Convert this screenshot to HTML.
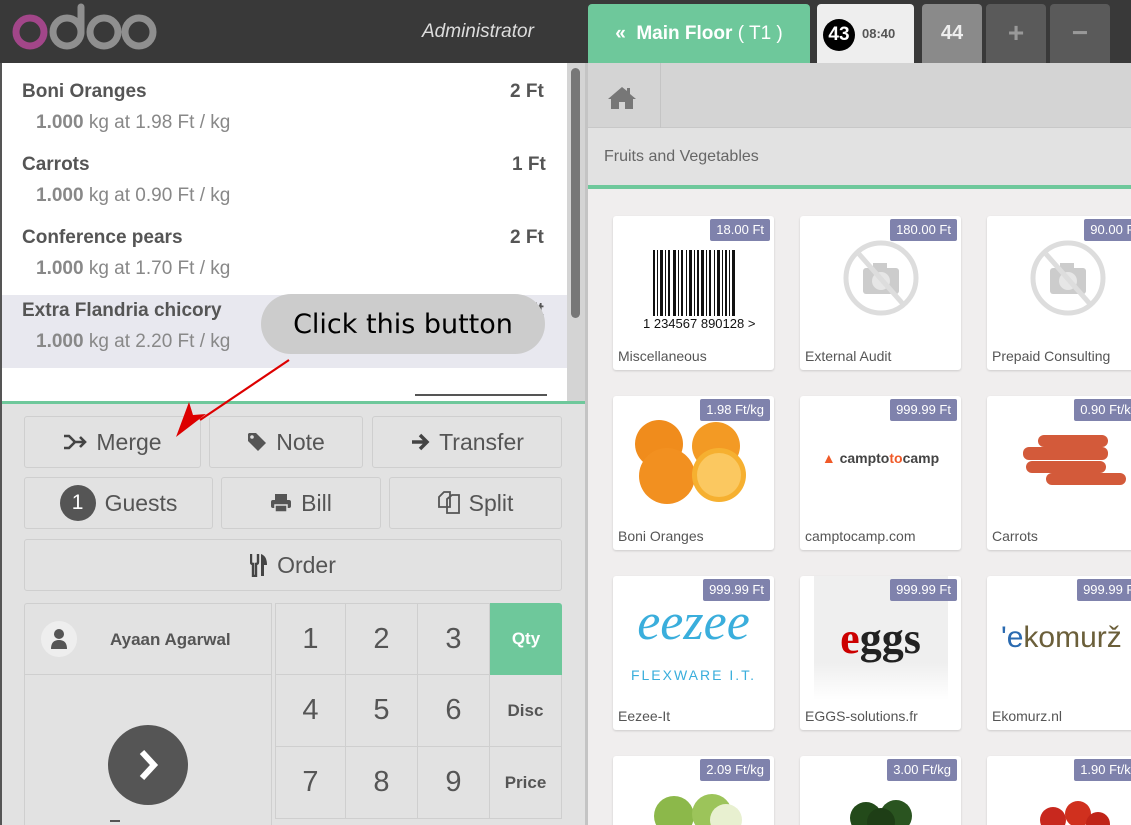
<!DOCTYPE html>
<html style="width:1131px;height:825px;overflow:hidden"><head><meta charset="utf-8"><style>
*{box-sizing:border-box;margin:0;padding:0}
body{width:1131px;height:825px;overflow:hidden;position:relative;background:#f0eeee;font-family:"Liberation Sans",sans-serif;color:#555}
.a{position:absolute}
.btn{position:absolute;background:#e2e2e2;border:1px solid #cfcfcf;border-radius:3px;display:flex;align-items:center;justify-content:center;font-size:23px;color:#555;gap:9px}
.line .n{position:absolute;left:22px;font-size:19px;font-weight:bold;color:#555}
.line .d{position:absolute;left:36px;font-size:19px;color:#888}
.line .d b{color:#888}
.np{position:absolute;border-right:1px solid #cfcfcf;border-bottom:1px solid #cfcfcf;display:flex;align-items:center;justify-content:center;font-size:29px;color:#555;background:#e2e2e2}
.card{position:absolute;width:161px;height:154px;background:#fff;border-radius:3px;box-shadow:0 1px 2px rgba(0,0,0,.15);overflow:hidden}
.card .pr{position:absolute;right:4px;top:3px;background:#7f82ac;color:#fff;font-size:13px;padding:2px 6px;border-radius:2px;height:22px;line-height:18px}
.card .nm{position:absolute;left:5px;bottom:6px;font-size:14px;color:#555}
.card .img{position:absolute;left:0;top:0;width:161px;height:124px;display:flex;align-items:center;justify-content:center}
</style></head><body>
<div class="a" style="left:0;top:0;width:1131px;height:63px;background:#393939"></div>
<svg class="a" style="left:0;top:0" width="170" height="63">
<circle cx="30" cy="32" r="14" fill="none" stroke="#a24689" stroke-width="7"/>
<circle cx="67" cy="32" r="14" fill="none" stroke="#8f8f8f" stroke-width="7"/>
<line x1="81" y1="7" x2="81" y2="33" stroke="#8f8f8f" stroke-width="7" stroke-linecap="round"/>
<circle cx="104" cy="32" r="14" fill="none" stroke="#8f8f8f" stroke-width="7"/>
<circle cx="139" cy="32" r="14" fill="none" stroke="#8f8f8f" stroke-width="7"/>
</svg>
<div class="a" style="left:422px;top:21px;font-size:19px;font-style:italic;color:#ddd">Administrator</div>
<div class="a" style="left:588px;top:4px;width:222px;height:59px;background:#6ec89b;border-radius:4px 4px 0 0;color:#fff;font-size:19px;font-weight:bold;display:flex;align-items:center;justify-content:center">« &nbsp;Main Floor <span style="font-weight:normal">&nbsp;( T1 )</span></div>
<div class="a" style="left:817px;top:4px;width:97px;height:59px;background:#eee;border-radius:4px 4px 0 0"></div>
<div class="a" style="left:823px;top:19px;width:32px;height:32px;border-radius:50%;background:#000;color:#fff;font-size:19px;font-weight:bold;text-align:center;line-height:32px">43</div>
<div class="a" style="left:862px;top:26px;font-size:13px;font-weight:bold;color:#555">08:40</div>
<div class="a" style="left:922px;top:4px;width:60px;height:59px;background:#8a8a8a;border-radius:4px 4px 0 0;color:#eee;font-size:20px;font-weight:bold;text-align:center;line-height:59px">44</div>
<div class="a" style="left:986px;top:4px;width:60px;height:59px;background:#5a5a5a;border-radius:4px 4px 0 0;color:#999;font-size:28px;font-weight:bold;text-align:center;line-height:57px">+</div>
<div class="a" style="left:1050px;top:4px;width:60px;height:59px;background:#5a5a5a;border-radius:4px 4px 0 0;color:#999;font-size:28px;font-weight:bold;text-align:center;line-height:57px">−</div>

<div class="a" style="left:588px;top:63px;width:543px;height:65px;background:#d4d4d4;border-bottom:1px solid #c8c8c8"></div>
<div class="a" style="left:660px;top:63px;width:1px;height:65px;background:#c4c4c4"></div>
<svg class="a" style="left:607px;top:86px" width="30" height="24" viewBox="0 0 30 24"><path d="M15 1 L1 13 L4 13 L4 23 L12 23 L12 16 L18 16 L18 23 L26 23 L26 13 L29 13 L23 8 L23 2 L20 2 L20 5 Z" fill="#777"/></svg>
<div class="a" style="left:588px;top:128px;width:543px;height:57px;background:#e2e2e2"></div>
<div class="a" style="left:604px;top:148px;font-size:16px;color:#666">Fruits and Vegetables</div>
<div class="a" style="left:588px;top:185px;width:543px;height:4px;background:#6ec89b"></div>
<div class="a" style="left:588px;top:189px;width:543px;height:636px;background:#f0eeee;overflow:hidden">
<div style="position:relative;left:-588px;top:-189px">
<div class="card" style="left:613px;top:216px"><div class="img"><svg width="130" height="100"><g fill="#111">
<rect x="24" y="22" width="2" height="84"/><rect x="28" y="22" width="1" height="84"/><rect x="31" y="22" width="3" height="84"/><rect x="36" y="22" width="1" height="84"/><rect x="39" y="22" width="2" height="84"/><rect x="44" y="22" width="3" height="84"/><rect x="49" y="22" width="1" height="84"/><rect x="52" y="22" width="2" height="84"/><rect x="57" y="22" width="1" height="84"/><rect x="60" y="22" width="3" height="84"/><rect x="65" y="22" width="1" height="84"/><rect x="68" y="22" width="2" height="84"/><rect x="72" y="22" width="3" height="84"/><rect x="77" y="22" width="1" height="84"/><rect x="80" y="22" width="2" height="84"/><rect x="85" y="22" width="1" height="84"/><rect x="88" y="22" width="3" height="84"/><rect x="93" y="22" width="1" height="84"/><rect x="96" y="22" width="2" height="84"/><rect x="100" y="22" width="1" height="84"/><rect x="103" y="22" width="3" height="84"/></g>
<rect x="20" y="88" width="100" height="14" fill="#fff"/><text x="14" y="100" font-size="13" font-family="Liberation Sans" fill="#111">1  234567  890128  &gt;</text></svg></div><div class="pr">18.00 Ft</div><div class="nm">Miscellaneous</div></div>
<div class="card" style="left:800px;top:216px"><div class="img"><svg width="80" height="80" viewBox="0 0 80 80"><circle cx="40" cy="40" r="35" fill="none" stroke="#ddd" stroke-width="5"/><rect x="22" y="30" width="36" height="26" rx="3" fill="#ccc"/><rect x="32" y="25" width="14" height="7" fill="#ccc"/><circle cx="40" cy="43" r="9" fill="#e6e6e6"/><line x1="18" y1="16" x2="62" y2="66" stroke="#ddd" stroke-width="5"/></svg></div><div class="pr">180.00 Ft</div><div class="nm">External Audit</div></div>
<div class="card" style="left:987px;top:216px"><div class="img"><svg width="80" height="80" viewBox="0 0 80 80"><circle cx="40" cy="40" r="35" fill="none" stroke="#ddd" stroke-width="5"/><rect x="22" y="30" width="36" height="26" rx="3" fill="#ccc"/><rect x="32" y="25" width="14" height="7" fill="#ccc"/><circle cx="40" cy="43" r="9" fill="#e6e6e6"/><line x1="18" y1="16" x2="62" y2="66" stroke="#ddd" stroke-width="5"/></svg></div><div class="pr">90.00 Ft</div><div class="nm">Prepaid Consulting</div></div>
<div class="card" style="left:613px;top:396px"><div class="img"><svg width="140" height="100"><circle cx="35" cy="36" r="24" fill="#f08c1c"/><circle cx="92" cy="38" r="24" fill="#f39a24"/><circle cx="43" cy="68" r="28" fill="#f29020"/><circle cx="95" cy="67" r="27" fill="#f6b030"/><circle cx="95" cy="67" r="22" fill="#fbc860"/></svg></div><div class="pr">1.98 Ft/kg</div><div class="nm">Boni Oranges</div></div>
<div class="card" style="left:800px;top:396px"><div class="img"><span style="font-size:14px;font-weight:bold;color:#444"><span style="color:#f05a28">▲</span> campto<span style="color:#f05a28">to</span>camp</span></div><div class="pr">999.99 Ft</div><div class="nm">camptocamp.com</div></div>
<div class="card" style="left:987px;top:396px"><div class="img"><svg width="120" height="70"><g fill="#d35a3a"><rect x="30" y="12" width="70" height="12" rx="6"/><rect x="15" y="24" width="85" height="13" rx="6"/><rect x="18" y="38" width="80" height="12" rx="6"/><rect x="38" y="50" width="80" height="12" rx="6"/></g></svg></div><div class="pr">0.90 Ft/kg</div><div class="nm">Carrots</div></div>
<div class="card" style="left:613px;top:576px"><div class="img" style="flex-direction:column"><span style="font-size:52px;font-style:italic;color:#3aaedc;font-family:'Liberation Serif',serif;line-height:60px">eezee</span><span style="font-size:14px;color:#3aaedc;letter-spacing:2px;margin-top:14px">FLEXWARE I.T.</span></div><div class="pr">999.99 Ft</div><div class="nm">Eezee-It</div></div>
<div class="card" style="left:800px;top:576px"><div class="img"><div style="width:134px;height:124px;background:linear-gradient(#efefef 70%,#fff);display:flex;align-items:center;justify-content:center"><span style="font-size:44px;font-weight:bold;font-family:'Liberation Serif',serif;color:#222"><span style="color:#c00">e</span>ggs</span></div></div><div class="pr">999.99 Ft</div><div class="nm">EGGS-solutions.fr</div></div>
<div class="card" style="left:987px;top:576px"><div class="img" style="justify-content:flex-start;padding-left:14px"><span style="font-size:30px;color:#6b5f3a"><span style="color:#2a6ab0">'e</span>komurž</span></div><div class="pr">999.99 Ft</div><div class="nm">Ekomurz.nl</div></div>
<div class="card" style="left:613px;top:756px"><div class="img"><svg width="120" height="124"><circle cx="40" cy="60" r="20" fill="#8cb84a"/><circle cx="78" cy="58" r="20" fill="#9cc45a"/><circle cx="92" cy="64" r="16" fill="#e8f0d0"/></svg></div><div class="pr">2.09 Ft/kg</div></div>
<div class="card" style="left:800px;top:756px"><div class="img"><svg width="120" height="124"><circle cx="45" cy="62" r="16" fill="#234a1a"/><circle cx="75" cy="60" r="16" fill="#2a5420"/><circle cx="60" cy="66" r="14" fill="#1e3e16"/></svg></div><div class="pr">3.00 Ft/kg</div></div>
<div class="card" style="left:987px;top:756px"><div class="img"><svg width="120" height="124"><circle cx="45" cy="64" r="13" fill="#c8281e"/><circle cx="70" cy="58" r="13" fill="#d0301e"/><circle cx="90" cy="68" r="12" fill="#c02418"/></svg></div><div class="pr">1.90 Ft/kg</div></div>
</div></div>

<div class="a" style="left:0;top:63px;width:588px;height:762px;background:#e2e2e2;border-left:2px solid #555;border-right:3px solid #c4c4c4"></div>
<div class="a" style="left:2px;top:63px;width:565px;height:340px;background:#fff"></div>
<div class="a" style="left:567px;top:63px;width:18px;height:340px;background:#d4d4d4"></div>
<div class="a" style="left:571px;top:68px;width:9px;height:250px;background:#777;border-radius:5px"></div>
<div class="line">
<div class="n" style="top:81px">Boni Oranges</div>
<div class="a" style="top:81px;left:510px;font-size:19px;font-weight:bold">2 Ft</div>
<div class="d" style="top:112px"><b>1.000</b> kg at 1.98 Ft / kg</div>
<div class="n" style="top:154px">Carrots</div><div class="a" style="top:154px;left:512px;font-size:19px;font-weight:bold">1 Ft</div>
<div class="d" style="top:185px"><b>1.000</b> kg at 0.90 Ft / kg</div>
<div class="n" style="top:227px">Conference pears</div><div class="a" style="top:227px;left:510px;font-size:19px;font-weight:bold">2 Ft</div>
<div class="d" style="top:258px"><b>1.000</b> kg at 1.70 Ft / kg</div>
<div class="a" style="left:2px;top:295px;width:565px;height:73px;background:#e8e8ef"></div>
<div class="n" style="top:300px">Extra Flandria chicory</div><div class="a" style="top:300px;left:510px;font-size:19px;font-weight:bold">2 Ft</div>
<div class="d" style="top:331px"><b>1.000</b> kg at 2.20 Ft / kg</div>
</div>
<div class="a" style="left:415px;top:394px;width:132px;height:2px;background:#555"></div>
<div class="a" style="left:2px;top:401px;width:583px;height:3px;background:#6ec89b"></div>

<div class="btn" style="left:24px;top:416px;width:177px;height:52px"><svg width="24" height="16" viewBox="0 0 24 16"><path d="M1 2 L6 2 L12 8 L6 14 L1 14 M10 8 L22 8 M17 3 L22 8 L17 13" fill="none" stroke="#444" stroke-width="2.6"/></svg>Merge</div>
<div class="btn" style="left:209px;top:416px;width:154px;height:52px"><svg width="20" height="20" viewBox="0 0 20 20"><path d="M1 2 L1 9 L11 19 L19 11 L9 1 L2 1 Z" fill="#555"/><circle cx="5" cy="5" r="1.8" fill="#e2e2e2"/></svg>Note</div>
<div class="btn" style="left:372px;top:416px;width:190px;height:52px"><svg width="20" height="20" viewBox="0 0 20 20"><path d="M2 10 L17 10 M10 3 L17 10 L10 17" fill="none" stroke="#444" stroke-width="3.5"/></svg>Transfer</div>
<div class="btn" style="left:24px;top:477px;width:189px;height:52px"><span style="width:36px;height:36px;border-radius:50%;background:#555;color:#fff;font-size:21px;display:flex;align-items:center;justify-content:center">1</span>Guests</div>
<div class="btn" style="left:221px;top:477px;width:160px;height:52px"><svg width="22" height="20" viewBox="0 0 22 20"><rect x="5" y="1" width="12" height="6" fill="#555"/><rect x="1" y="7" width="20" height="8" rx="2" fill="#555"/><rect x="5" y="12" width="12" height="7" fill="#555" stroke="#e2e2e2" stroke-width="1.5"/></svg>Bill</div>
<div class="btn" style="left:389px;top:477px;width:173px;height:52px"><svg width="22" height="24" viewBox="0 0 22 24"><path d="M1 6 L6 1 L12 1 L12 16 L1 16 Z M9 8 L14 4 L21 4 L21 22 L9 22 Z" fill="none" stroke="#555" stroke-width="1.8"/></svg>Split</div>
<div class="btn" style="left:24px;top:539px;width:538px;height:52px"><svg width="18" height="24" viewBox="0 0 18 24"><path d="M1 1 L1 9 Q1 11 3 11 L3 23 L6 23 L6 11 Q8 11 8 9 L8 1" fill="none" stroke="#444" stroke-width="2.4"/><path d="M11 23 L11 1 Q17 3 17 12 L14 12 L14 23 Z" fill="#444"/></svg>Order</div>

<div class="a" style="left:24px;top:603px;width:248px;height:222px;border:1px solid #cfcfcf;border-bottom:none;border-radius:3px 0 0 0;background:#e2e2e2"></div>
<div class="a" style="left:24px;top:674px;width:248px;height:1px;background:#cfcfcf"></div>
<div class="a" style="left:41px;top:621px;width:36px;height:36px;border-radius:50%;background:#eee"></div>
<svg class="a" style="left:50px;top:628px" width="18" height="22" viewBox="0 0 18 22"><circle cx="9" cy="6" r="5" fill="#555"/><path d="M1 21 Q1 12 9 12 Q17 12 17 21 Z" fill="#555"/></svg>
<div class="a" style="left:110px;top:630px;font-size:17px;font-weight:bold;color:#555">Ayaan Agarwal</div>
<div class="a" style="left:108px;top:725px;width:80px;height:80px;border-radius:50%;background:#555"></div>
<svg class="a" style="left:136px;top:748px" width="28" height="34" viewBox="0 0 28 34"><path d="M6 4 L18 17 L6 30" fill="none" stroke="#fff" stroke-width="6"/></svg>
<div class="a" style="left:110px;top:820px;width:10px;height:2px;background:#555"></div>

<div class="np" style="left:275px;top:603px;width:71px;height:72px;border-left:1px solid #cfcfcf;border-top:1px solid #cfcfcf">1</div>
<div class="np" style="left:346px;top:603px;width:72px;height:72px;border-top:1px solid #cfcfcf">2</div>
<div class="np" style="left:418px;top:603px;width:72px;height:72px;border-top:1px solid #cfcfcf">3</div>
<div class="np" style="left:490px;top:603px;width:72px;height:72px;background:#6ec89b;color:#fff;font-size:17px;font-weight:bold;border:none;border-radius:0 3px 0 0">Qty</div>
<div class="np" style="left:275px;top:675px;width:71px;height:72px;border-left:1px solid #cfcfcf">4</div>
<div class="np" style="left:346px;top:675px;width:72px;height:72px">5</div>
<div class="np" style="left:418px;top:675px;width:72px;height:72px">6</div>
<div class="np" style="left:490px;top:675px;width:72px;height:72px;font-size:17px;font-weight:bold">Disc</div>
<div class="np" style="left:275px;top:747px;width:71px;height:72px;border-left:1px solid #cfcfcf">7</div>
<div class="np" style="left:346px;top:747px;width:72px;height:72px">8</div>
<div class="np" style="left:418px;top:747px;width:72px;height:72px">9</div>
<div class="np" style="left:490px;top:747px;width:72px;height:72px;font-size:17px;font-weight:bold">Price</div>

<div class="a" style="left:261px;top:294px;width:284px;height:60px;border-radius:30px;background:#cccccc;color:#000;font-family:'DejaVu Sans',sans-serif;font-size:27px;display:flex;align-items:center;justify-content:center">Click this button</div>
<svg class="a" style="left:0;top:0;pointer-events:none" width="600" height="450"><line x1="289" y1="360" x2="200" y2="420" stroke="#d00" stroke-width="2.2"/><path d="M176 437 L189 402 L193 415 L206 414 Z" fill="#d00"/></svg>
</body></html>
